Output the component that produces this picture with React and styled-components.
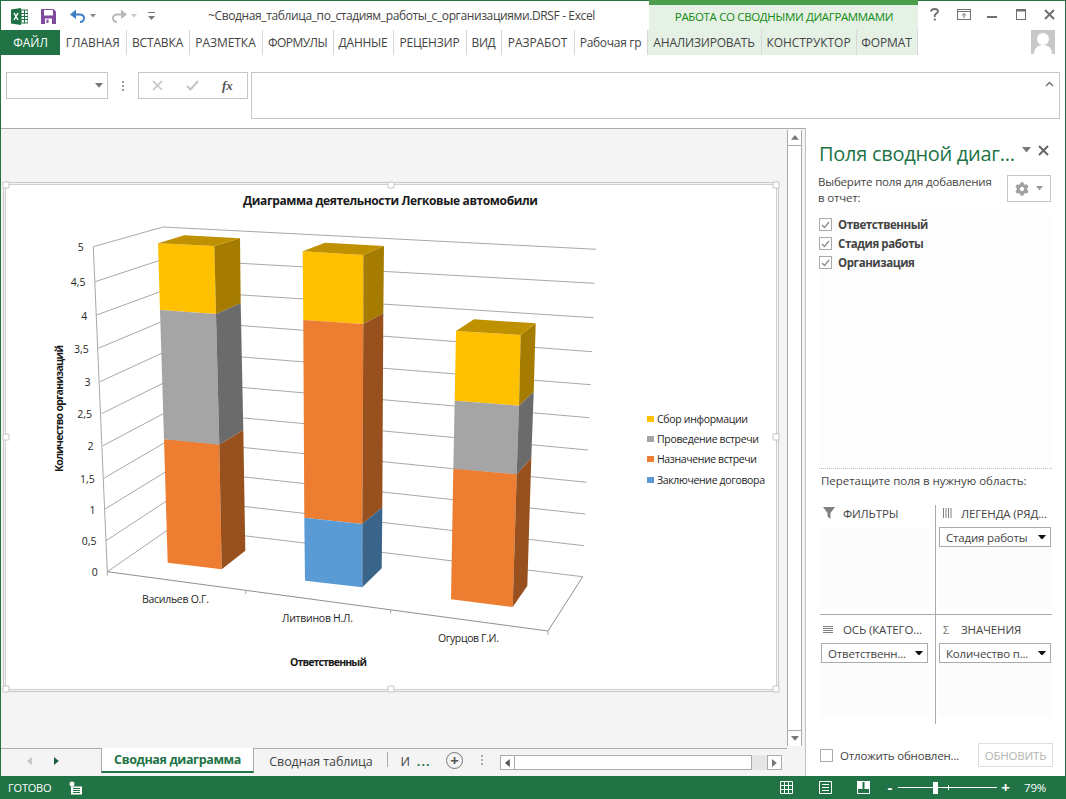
import React from 'react';
import styled, { createGlobalStyle } from 'styled-components';
import { FaCog } from 'react-icons/fa';

const GREEN = '#217346';
const UI = '"Open Sans", "Noto Sans", sans-serif';

const Global = createGlobalStyle`
  html, body { margin: 0; padding: 0; background: #fff; overflow: hidden; }
  * { box-sizing: border-box; }
  body { font-family: ${UI}; color: #444; }
`;

const Win = styled.div`
  width: 1066px; height: 799px; display: flex; flex-direction: column;
  background: #fff; border-left: 1px solid ${GREEN}; border-right: 1px solid ${GREEN};
  overflow: hidden;
`;
const TitleBar = styled.div`
  height: 30px; flex: none; display: flex; align-items: stretch; border-top: 1px solid ${GREEN};
`;
const Qat = styled.div`
  width: 164px; flex: none; display: flex; align-items: center; padding-left: 10px; margin-top: 1px;
`;
const QatIcon = styled.svg`
  display: block; flex: none; margin-right: ${p => p.$mr || 0}px;
`;
const DocTitle = styled.div`
  width: 484px; flex: none; padding-left: 43px; font-size: 12px; line-height: 29px; white-space: nowrap;
  letter-spacing: -0.375px; color: #444;
`;
const ContextHead = styled.div`
  width: 269px; flex: none; margin-top: -1px; background: #e6f1e6; border-top: 5px solid #4c9e4c;
  display: flex; align-items: center; justify-content: center; padding: 0 0 2px 1px;
  font-size: 11.5px; letter-spacing: -0.35px; color: #108a10; white-space: nowrap;
`;
const WinBtns = styled.div`
  flex: 1; display: flex; align-items: center; padding-left: 12px; padding-bottom: 2px;
`;
const TabBar = styled.div`
  height: 25px; flex: none; display: flex; align-items: stretch; position: relative;
`;
const FileTab = styled.div`
  width: 59px; flex: none; background: ${GREEN}; color: #fff; font-size: 12px;
  display: flex; align-items: center; justify-content: center;
`;
const Tab = styled.div`
  width: ${p => p.$w}px; flex: none; display: flex; align-items: center; justify-content: center; padding-bottom: 1px;
  font-size: 12px; color: #444; white-space: nowrap; letter-spacing: ${p => p.$ls}px;
  border-right: 1px solid #d8d8d8; background: ${p => (p.$ctx ? '#e6f1e6' : 'transparent')};
`;
const Avatar = styled.svg`
  position: absolute; left: 1030px; top: 0;
`;
const FormulaRow = styled.div`
  height: 47px; flex: none; margin: 17px 0 9px; display: flex; align-items: flex-start; padding-left: 5px;
`;
const NameBox = styled.div`
  width: 102px; height: 27px; flex: none; border: 1px solid #c6c6c6; display: flex; align-items: center;
  justify-content: flex-end; padding-right: 4px;
`;
const Grip = styled.div`
  width: 30px; height: 27px; flex: none; display: flex; flex-direction: column; gap: 2px;
  align-items: center; justify-content: center;
  i { display: block; width: 2px; height: 2px; background: #999; }
`;
const FuncBox = styled.div`
  width: 110px; height: 27px; flex: none; border: 1px solid #c6c6c6; display: flex; align-items: center;
  gap: 23px; padding-left: 13px; color: #555;
`;
const FxLabel = styled.span`
  font-family: "Liberation Serif", serif; font-style: italic; font-weight: bold; font-size: 13px; color: #555;
`;
const FormulaInput = styled.div`
  width: 809px; height: 47px; flex: none; margin-left: 3px; border: 1px solid #c6c6c6; display: flex;
  justify-content: flex-end; padding: 8px 5px 0 0;
`;
const Main = styled.div`
  flex: 1; min-height: 0; display: flex; align-items: stretch;
`;
const Sheet = styled.div`
  width: 805px; flex: none; display: flex; flex-direction: column; border-top: 1px solid #ababab;
  border-right: 1px solid #c0c0c0; background: #f4f4f4;
`;
const SheetBody = styled.div`
  flex: 1; min-height: 0; display: flex; align-items: stretch;
`;
const Canvas = styled.div`
  width: 786px; flex: none; padding: 55px 0 0 4px;
`;
const ChartFrame = styled.div`
  width: 772px; height: 506px; background: #fff; position: relative; border: 1px solid #d0d0d0;
  outline: 1px solid #c8c8c8; outline-offset: 1px;
`;
const Handle = styled.div`
  position: absolute; width: 7px; height: 7px; background: #fff; border: 1px solid #c4c4c4; border-radius: 1px;
  left: ${p => p.$x}; top: ${p => p.$y}; transform: translate(-50%, -50%);
`;
const ChartSvg = styled.svg`
  display: block; width: 770px; height: 504px; font-family: ${UI};
`;
const VScroll = styled.div`
  width: 15px; flex: none; margin: 1px 0 2px; display: flex; flex-direction: column; justify-content: space-between;
  background: #fff; border-left: 1px solid #ababab; border-right: 1px solid #ababab;
`;
const ScrollBtn = styled.div`
  height: 16px; display: flex; align-items: center; justify-content: center; background: #fff;
  border-${p => p.$side}: 1px solid #ababab;
`;
const SheetTabs = styled.div`
  height: 28px; flex: none; display: flex; align-items: flex-start; padding-bottom: 3px;
`;
const TabStrip = styled.div`
  height: 25px; flex: 1; display: flex; align-items: stretch; border-top: 1px solid #ababab; margin-right: 18px;
`;
const Nav = styled.div`
  width: 100px; flex: none; display: flex; align-items: center; gap: 22px; padding-left: 26px;
`;
const ActiveSheet = styled.div`
  width: 153px; flex: none; background: #fff; border-left: 1px solid #ababab; border-right: 1px solid #ababab;
  border-bottom: 2px solid ${GREEN}; margin-top: -1px; color: ${GREEN}; font-weight: 700; font-size: 12.5px;
  display: flex; align-items: center; justify-content: center; white-space: nowrap; letter-spacing: -0.38px;
`;
const SheetTab = styled.div`
  width: ${p => p.$w}px; flex: none; display: flex; align-items: center; justify-content: center; font-size: 12.5px;
  color: #444; white-space: nowrap; letter-spacing: -0.1px; ${p => p.$sep ? 'position: relative; &::after { content: ""; position: absolute; right: 0; top: 3px; bottom: 6px; width: 1px; background: #ababab; }' : ''}
`;
const MoreDots = styled.b`
  color: ${GREEN}; letter-spacing: 1px; margin-left: 7px;
`;
const PlusBtn = styled.div`
  width: 17px; height: 17px; flex: none; margin: 3px 0 0 3px; border: 1px solid #777; border-radius: 50%;
  display: flex; align-items: center; justify-content: center; color: #555; font-size: 15px; line-height: 1; font-weight: 700;
  background: #f4f4f4;
`;
const TabGrip = styled.div`
  width: 37px; flex: none; display: flex; flex-direction: column; gap: 2px; align-items: center; justify-content: center;
  padding-bottom: 3px; i { display: block; width: 2px; height: 2px; background: #aaa; }
`;
const HScroll = styled.div`
  flex: 1; display: flex; align-items: stretch; height: 15px; margin-top: 6px; margin-right: 5px;
`;
const HBtn = styled.div`
  width: 15px; flex: none; border: 1px solid #ababab; background: #fff; display: flex; align-items: center; justify-content: center;
`;
const HThumb = styled.div`
  flex: 1; background: #fff; border: 1px solid #ababab; border-left: none;
`;
const HTrack = styled.div`
  width: 15px; flex: none; background: #e6e6e6;
`;

const Pane = styled.div`
  flex: 1; min-width: 0; display: flex; flex-direction: column; background: #fff; padding: 10px 13px 0 13px;
`;
const PaneHead = styled.div`
  height: 30px; flex: none; display: flex; align-items: center; justify-content: space-between; padding-right: 3px;
`;
const PaneTitle = styled.div`
  font-size: 20px; color: ${GREEN}; white-space: nowrap; letter-spacing: -0.28px; font-weight: 400;
`;
const PaneCtrls = styled.div`
  display: flex; align-items: center; gap: 7px; padding-bottom: 6px;
`;
const ChooseRow = styled.div`
  height: 28px; flex: none; margin-top: 7px; display: flex; justify-content: space-between;
`;
const Hint = styled.div`
  font-size: 11.5px; line-height: 16px; color: #444; white-space: pre-line; letter-spacing: -0.18px;
  margin: -1px 0 0 -1px;
`;
const GearBtn = styled.div`
  width: 44px; height: 27px; flex: none; border: 1px solid #c6c6c6; display: flex; align-items: center; justify-content: center; gap: 7px;
  color: #a0a0a0; margin-right: 1px;
`;
const FieldList = styled.div`
  height: 252px; flex: none; margin-top: 11px; background: #fdfdfd; margin-right: 1px; padding-top: 1px;
`;
const FieldRow = styled.div`
  height: 19px; display: flex; align-items: center; gap: 6px; font-size: 11.5px; font-weight: 700; color: #444; letter-spacing: -0.43px;
`;
const Check = styled.div`
  width: 13px; height: 13px; flex: none; border: 1px solid #ababab; display: flex; align-items: center; justify-content: center; background: #fff;
`;
const Dotted = styled.div`
  height: 0; flex: none; margin-top: 2px; border-top: 1px dotted #bbb;
`;
const DragHint = styled.div`
  font-size: 11.5px; line-height: 16px; margin-top: 4px; padding-left: 2px; color: #444; white-space: nowrap; letter-spacing: -0.04px;
`;
const Zones = styled.div`
  width: 232px; height: 219px; flex: none; margin: 16px 0 0 1px; display: grid; grid-template-columns: 116px 116px; grid-template-rows: 110px 109px;
`;
const Zone = styled.div`
  padding-top: ${p => p.$pad}px; display: flex; flex-direction: column; min-width: 0;
  padding-left: ${p => (p.$right ? 2 : 0)}px;
  ${p => (p.$right ? '' : 'border-right: 1px solid #ababab;')}
  ${p => (p.$top ? 'border-bottom: 1px solid #ababab;' : '')}
`;
const ZoneHead = styled.div`
  height: 16px; flex: none; display: flex; align-items: center; font-size: 11.5px; color: #444; white-space: nowrap; letter-spacing: -0.14px;
  padding-left: ${p => (p.$right ? 5 : 3)}px; margin-bottom: 6px;
`;
const ZoneIcon = styled.span`
  width: ${p => (p.$right ? 18 : 20)}px; flex: none; display: flex; justify-content: flex-start; color: #777; font-size: 11px;
`;
const ZoneBody = styled.div`
  flex: 1; min-height: 0; background: #fcfcfc; margin-right: ${p => (p.$right ? 0 : 6)}px; margin-bottom: 6px;
`;
const Pill = styled.div`
  height: 20px; margin: 0 ${p => (p.$right ? 1 : 1)}px 0 ${p => (p.$right ? 1 : 1)}px; display: flex; align-items: center; justify-content: space-between; padding: 0 4px 0 6px;
  border: 1px solid #ababab; background: #fff; font-size: 11.5px; color: #444; white-space: nowrap; letter-spacing: -0.18px;
`;
const Foot = styled.div`
  height: 24px; flex: none; margin-top: 19px; display: flex; align-items: center; justify-content: space-between; padding-left: 1px; margin-right: -1px;
`;
const DeferLabel = styled.label`
  display: flex; align-items: center; gap: 7px; font-size: 11.5px; color: #444; white-space: nowrap; letter-spacing: -0.18px;
`;
const UpdateBtn = styled.div`
  width: 75px; height: 24px; border: 1px solid #dedede; color: #b4b4b4; font-size: 11.5px; letter-spacing: -0.2px;
  display: flex; align-items: center; justify-content: center;
`;
const Status = styled.div`
  height: 23px; flex: none; margin: 0 -1px; background: ${GREEN}; color: #fff; display: flex; align-items: center;
  font-size: 11px; padding: 0 13px 0 8px;
`;
const StatusText = styled.span`
  letter-spacing: -0.2px; width: 61px; flex: none;
`;
const StatusSpacer = styled.div`
  flex: 1;
`;
const StatusIcon = styled.svg`
  display: block; flex: none; margin-right: ${p => p.$mr || 0}px;
`;
const Zoom = styled.div`
  width: 99px; height: 13px; flex: none; position: relative; display: flex; align-items: center; margin: 0 2px 0 4px;
  &::before { content: ""; display: block; width: 100%; height: 1px; background: #fff; }
`;
const ZoomThumb = styled.div`
  position: absolute; left: 35px; top: 1px; width: 5px; height: 12px; background: #fff;
`;
const ZoomTick = styled.div`
  position: absolute; left: 50px; top: 4px; width: 1px; height: 5px; background: #fff;
`;
const ZoomSign = styled.span`
  font-size: 15px; font-weight: 700; line-height: 1; width: ${p => p.$w}px; text-align: center; flex: none; margin-top: -1px;
`;
const ZoomPct = styled.span`
  width: 41px; flex: none; padding-left: 12px; font-size: 11.5px; letter-spacing: -0.2px;
`;

const Tri = ({ c = '#777', s = 8, up, right, left }) => {
  const h = s * 0.6;
  let pts = `0,0 ${s},0 ${s / 2},${h}`;
  let w = s, ht = h;
  if (up) pts = `0,${h} ${s},${h} ${s / 2},0`;
  if (right) { pts = `0,0 ${h},${s / 2} 0,${s}`; w = h; ht = s; }
  if (left) { pts = `${h},0 0,${s / 2} ${h},${s}`; w = h; ht = s; }
  return <svg width={w} height={ht} viewBox={`0 0 ${w} ${ht}`} style={{ display: 'block', flex: 'none' }}><polygon points={pts} fill={c} /></svg>;
};

const ExcelIcon = () => (
  <QatIcon width="17" height="17" viewBox="0 0 17 17" $mr={13}>
    <rect x="6" y="2" width="11" height="13" fill="#fff" stroke="#1e7145" />
    <path d="M10 2v13M13.500 2v13M6 5.500h11M6 8.500h11M6 11.500h11" stroke="#1e7145" strokeWidth="1" />
    <polygon points="0,1.500 10,0 10,17 0,15.500" fill="#1e7145" />
    <path d="M3 5l4 7M7 5l-4 7" stroke="#fff" strokeWidth="1.500" />
  </QatIcon>
);
const SaveIcon = () => (
  <QatIcon width="15" height="15" viewBox="0 0 15 15" $mr={14}>
    <path d="M0 0h12.500L15 2.500V15H0z" fill="#7e4b9e" />
    <rect x="3" y="1" width="9" height="5.500" fill="#fff" />
    <rect x="4" y="9.500" width="7" height="5.500" fill="#fff" />
    <rect x="5.500" y="10.500" width="2" height="3.500" fill="#7e4b9e" />
  </QatIcon>
);
const UndoIcon = ({ c, flip, mr }) => (
  <QatIcon width="16" height="14" viewBox="0 0 16 14" $mr={mr} style={flip ? { transform: 'scaleX(-1)' } : undefined}>
    <path d="M2 5.500h7.500c3 0 4.500 1.800 4.500 3.800s-1.700 3.700-4 3.700" fill="none" stroke={c} strokeWidth="2" />
    <polygon points="6,0.500 6,10 0,5.500" fill={c} />
  </QatIcon>
);
const WinIcons = () => (
  <>
    <QatIcon width="9" height="13" viewBox="0 0 9 13" $mr={18}>
      <path d="M1 3.500C1 1.500 2.500 1 4.500 1S8 2 8 3.500 6 5.500 4.800 7v2" fill="none" stroke="#707070" strokeWidth="1.800" />
      <rect x="3.800" y="10.500" width="2" height="2" fill="#707070" />
    </QatIcon>
    <QatIcon width="14" height="11" viewBox="0 0 14 11" $mr={16}>
      <rect x=".5" y=".5" width="13" height="10" fill="none" stroke="#707070" />
      <path d="M1 2.500h12" stroke="#707070" />
      <path d="M7 9V4.500M5 6.500l2-2 2 2" fill="none" stroke="#707070" />
    </QatIcon>
    <QatIcon width="10" height="11" viewBox="0 0 10 11" $mr={19}>
      <rect x="0" y="7" width="10" height="2" fill="#707070" />
    </QatIcon>
    <QatIcon width="10" height="11" viewBox="0 0 10 11" $mr={18}>
      <rect x=".5" y=".5" width="9" height="10" fill="none" stroke="#707070" />
      <rect x="0" y="0" width="10" height="2.500" fill="#707070" />
    </QatIcon>
    <QatIcon width="11" height="11" viewBox="0 0 11 11">
      <path d="M1 1l9 9M10 1l-9 9" stroke="#707070" strokeWidth="2" />
    </QatIcon>
  </>
);

const tabs = [
  ['ГЛАВНАЯ', 66.5, 0], ['ВСТАВКА', 63, -0.14], ['РАЗМЕТКА', 73, -0.05], ['ФОРМУЛЫ', 71, -0.56], ['ДАННЫЕ', 60, -0.25], ['РЕЦЕНЗИР', 73, -0.17], ['ВИД', 35, -0.42], ['РАЗРАБОТ', 73, -0.05], ['Рабочая гр', 73, -0.3],
];
const ctxTabs = [['АНАЛИЗИРОВАТЬ', 114, -0.19], ['КОНСТРУКТОР', 95, -0.06], ['ФОРМАТ', 61, -0.09]];

const backLeftY = [227, 259, 290, 320, 351, 381, 411, 440, 469, 498, 527];
const backRight = [[596, 249.3], [594.7, 283.3], [593.7, 317.7], [592, 351.7], [590.7, 384.7], [589.3, 417.7], [588, 450], [586.7, 482.3], [585.3, 514], [584, 545.7], [582.7, 576.7]];
const frontAxis = [[93.3, 246.7], [95, 281.7], [96.7, 315], [98.3, 348.3], [100, 381.7], [101.500, 413.7], [103, 445.7], [104.300, 478], [105, 509], [106, 540.7], [107.3, 571.7]];
const yLabels = ['5', '4,5', '4', '3,5', '3', '2,5', '2', '1,5', '1', '0,5', '0'];

const C = {
  y: ['#ffc000', '#a67c00', '#bf9000'],
  g: ['#a5a5a5', '#6b6b6b'],
  o: ['#ed7d31', '#98511e'],
  b: ['#5b9bd5', '#3a6489'],
};
const bars = [
  {
    top: [[158, 243.3], [214.3, 246], [240, 238.3], [184.3, 235.3]],
    segs: [
      ['y', [158, 243.3], [214.3, 246], [240, 238.3], [160, 310], [216, 314], [240.7, 303.3]],
      ['g', [160, 310], [216, 314], [240.7, 303.3], [164, 439.3], [219.3, 444.7], [243.3, 430]],
      ['o', [164, 439.3], [219.3, 444.7], [243.3, 430], [167.7, 562.7], [221.7, 569.3], [245.3, 550.7]],
    ],
  },
  {
    top: [[302.7, 251.3], [363.3, 255], [384, 246], [325, 242.7]],
    segs: [
      ['y', [302.7, 251.3], [363.3, 255], [384, 246], [303.3, 320], [363.3, 324], [383.3, 313.3]],
      ['o', [303.3, 320], [363.3, 324], [383.3, 313.3], [304.3, 517.7], [362.3, 524], [382.3, 507.3]],
      ['b', [304.3, 517.7], [362.3, 524], [382.3, 507.3], [305, 580.7], [362.3, 587.3], [381.7, 568.3]],
    ],
  },
  {
    top: [[456, 331], [520.7, 335], [535.7, 323.3], [474, 319.3]],
    segs: [
      ['y', [456, 331], [520.7, 335], [535.7, 323.3], [454.7, 400.7], [519, 405.7], [533.7, 391.7]],
      ['g', [454.7, 400.7], [519, 405.7], [533.7, 391.7], [453.3, 468.7], [516.7, 474.3], [531.3, 458.3]],
      ['o', [453.3, 468.7], [516.7, 474.3], [531.3, 458.3], [451, 599.3], [512.7, 607], [527.3, 586]],
    ],
  },
];
const pts = a => a.map(p => p.join(',')).join(' ');
const legend = [['#ffc000', 'Сбор информации', 421, 91], ['#a5a5a5', 'Проведение встречи', 441, 102], ['#ed7d31', 'Назначение встречи', 461, 100], ['#5b9bd5', 'Заключение договора', 482, 108]];

const Chart = () => (
  <ChartSvg viewBox="6 185 770 504">
    <text x="243" y="204.500" fontSize="12" fontWeight="700" fill="#1a1a1a" textLength="295" lengthAdjust="spacing">Диаграмма деятельности Легковые автомобили</text>
    <g stroke="#a8a8a8" strokeWidth="1" fill="none">
      {backLeftY.map((y, i) => {
        const x = 163 + (i / 10) * 9;
        return (
          <g key={i}>
            <line x1={x} y1={y} x2={backRight[i][0]} y2={backRight[i][1]} />
            <line x1={frontAxis[i][0]} y1={frontAxis[i][1]} x2={x} y2={y} />
          </g>
        );
      })}
      <line x1="93.300" y1="246.700" x2="107.300" y2="571.700" />
      <polyline points="107.300,571.700 548,631 582.700,576.700" stroke="#909090" />
      <path d="M107.300 571.700v4M245.700 590.300v3.500M390.700 610v3.500M548 631v4" />
    </g>
    {bars.map((b, i) => (
      <g key={i}>
        {b.segs.map(([k, a, c, d, e, f, g], j) => (
          <g key={j}>
            <polygon points={pts([a, c, f, e])} fill={C[k][0]} />
            <polygon points={pts([c, d, g, f])} fill={C[k][1]} />
          </g>
        ))}
        <polygon points={pts(b.top)} fill="#bf9000" />
      </g>
    ))}
    <g fontSize="10.5" fill="#262626" textAnchor="end">
      {yLabels.map((l, i) => (
        <text key={l} x={frontAxis[i][0] - 9.500} y={frontAxis[i][1] + 4.500}>{l}</text>
      ))}
    </g>
    <text transform="translate(63 472) rotate(-90)" fontSize="10.5" fontWeight="700" fill="#1a1a1a" textLength="127" lengthAdjust="spacing">Количество организаций</text>
    <g fontSize="10.5" fill="#262626">
      <text x="142" y="603" textLength="67" lengthAdjust="spacing">Васильев О.Г.</text>
      <text x="282" y="622" textLength="71" lengthAdjust="spacing">Литвинов Н.Л.</text>
      <text x="438" y="642" textLength="61" lengthAdjust="spacing">Огурцов Г.И.</text>
    </g>
    <text x="290" y="666" fontSize="10.5" fontWeight="700" fill="#1a1a1a" textLength="77" lengthAdjust="spacing">Ответственный</text>
    {legend.map(([c, t, y, w]) => (
      <g key={t}>
        <rect x="647" y={y - 5} width="7" height="6" fill={c} />
        <text x="657" y={y + 1.500} fontSize="10.5" fill="#262626" textLength={w} lengthAdjust="spacing">{t}</text>
      </g>
    ))}
  </ChartSvg>
);

const CheckMark = () => (
  <svg width="9" height="8" viewBox="0 0 9 8"><path d="M1 4l2.500 2.500L8 1" fill="none" stroke="#8a8a8a" strokeWidth="1.200" /></svg>
);

const ZONES = [
  { id: 'f', label: 'ФИЛЬТРЫ', icon: <svg width="12" height="12" viewBox="0 0 12 12" style={{ display: 'block' }}><path d="M0 0h12L7.500 6v6L4.500 9.500V6z" fill="#808080" /></svg> },
  { id: 'l', label: 'ЛЕГЕНДА (РЯД...', pill: 'Стадия работы', right: true, icon: <svg width="10" height="10" viewBox="0 0 10 10" style={{ display: 'block' }}><path d="M.5 0v10M3 0v10M5.500 0v10M8 0v10" stroke="#808080" /></svg> },
  { id: 'a', label: 'ОСЬ (КАТЕГО...', pill: 'Ответственн...', icon: <svg width="10" height="8" viewBox="0 0 10 8" style={{ display: 'block', marginTop: 1 }}><path d="M0 .5h10M0 2.500h10M0 4.500h10M0 6.500h10" stroke="#808080" /></svg> },
  { id: 'v', label: 'ЗНАЧЕНИЯ', pill: 'Количество п...', right: true, icon: 'Σ' },
];

export default function App() {
  return (
    <Win>
      <Global />
      <TitleBar>
        <Qat>
          <ExcelIcon />
          <SaveIcon />
          <UndoIcon c="#3d7fc4" mr={4} />
          <span style={{ marginRight: 15 }}><Tri c="#888" s={6} /></span>
          <UndoIcon c="#b8b8b8" flip mr={4} />
          <span style={{ marginRight: 11 }}><Tri c="#c8c8c8" s={6} /></span>
          <QatIcon width="7" height="9" viewBox="0 0 7 9"><path d="M0 .5h7" stroke="#777" /><polygon points="0,4 7,4 3.500,8" fill="#777" /></QatIcon>
        </Qat>
        <DocTitle>~Сводная_таблица_по_стадиям_работы_с_организациями.DRSF - Excel</DocTitle>
        <ContextHead>РАБОТА СО СВОДНЫМИ ДИАГРАММАМИ</ContextHead>
        <WinBtns><WinIcons /></WinBtns>
      </TitleBar>
      <TabBar>
        <FileTab>ФАЙЛ</FileTab>
        {tabs.map(([t, w, ls]) => <Tab key={t} $w={w} $ls={ls}>{t}</Tab>)}
        {ctxTabs.map(([t, w, ls]) => <Tab key={t} $w={w} $ls={ls} $ctx>{t}</Tab>)}
        <Avatar width="24" height="24" viewBox="0 0 24 24">
          <rect width="24" height="24" fill="#c8c8c8" />
          <circle cx="12" cy="9" r="6" fill="#fff" />
          <path d="M3 24c0-6 4-9 9-9s9 3 9 9z" fill="#fff" />
        </Avatar>
      </TabBar>
      <FormulaRow>
        <NameBox><Tri c="#777" s={8} /></NameBox>
        <Grip><i /><i /><i /></Grip>
        <FuncBox>
          <svg width="11" height="11" viewBox="0 0 11 11"><path d="M1 1l9 9M10 1l-9 9" stroke="#c4c4c4" strokeWidth="1.600" /></svg>
          <svg width="13" height="11" viewBox="0 0 13 11"><path d="M1 6l3.500 3.500L12 1" fill="none" stroke="#c4c4c4" strokeWidth="2" /></svg>
          <FxLabel>fx</FxLabel>
        </FuncBox>
        <FormulaInput>
          <svg width="9" height="6" viewBox="0 0 9 6"><path d="M1 5l3.500-3.500L8 5" fill="none" stroke="#777" strokeWidth="1.500" /></svg>
        </FormulaInput>
      </FormulaRow>
      <Main>
        <Sheet>
          <SheetBody>
            <Canvas>
              <ChartFrame>
                <Chart />
                <Handle $x="0" $y="0" />
                <Handle $x="50%" $y="0" />
                <Handle $x="100%" $y="0" />
                <Handle $x="0" $y="50%" />
                <Handle $x="100%" $y="50%" />
                <Handle $x="0" $y="100%" />
                <Handle $x="50%" $y="100%" />
                <Handle $x="100%" $y="100%" />
              </ChartFrame>
            </Canvas>
            <VScroll>
              <ScrollBtn $side="bottom"><Tri c="#777" s={8} up /></ScrollBtn>
              <ScrollBtn $side="top"><Tri c="#777" s={8} /></ScrollBtn>
            </VScroll>
          </SheetBody>
          <SheetTabs>
            <TabStrip>
              <Nav><Tri c="#c4c4c4" s={8} left /><Tri c="#1c5f3a" s={8} right /></Nav>
              <ActiveSheet>Сводная диаграмма</ActiveSheet>
              <SheetTab $w={134} $sep>Сводная таблица</SheetTab>
              <SheetTab $w={55}>И<MoreDots>...</MoreDots></SheetTab>
              <PlusBtn>+</PlusBtn>
              <TabGrip><i /><i /><i /></TabGrip>
              <HScroll>
                <HBtn><Tri c="#555" s={8} left /></HBtn>
                <HThumb />
                <HTrack />
                <HBtn><Tri c="#777" s={8} right /></HBtn>
              </HScroll>
            </TabStrip>
          </SheetTabs>
        </Sheet>
        <Pane>
          <PaneHead>
            <PaneTitle>Поля сводной диаг...</PaneTitle>
            <PaneCtrls>
              <Tri c="#777" s={9} />
              <svg width="11" height="11" viewBox="0 0 11 11"><path d="M1 1l9 9M10 1l-9 9" stroke="#666" strokeWidth="2" /></svg>
            </PaneCtrls>
          </PaneHead>
          <ChooseRow>
            <Hint>{'Выберите поля для добавления\nв отчет:'}</Hint>
            <GearBtn><FaCog size={14} /><Tri c="#999" s={7} /></GearBtn>
          </ChooseRow>
          <FieldList>
            {['Ответственный', 'Стадия работы', 'Организация'].map(f => (
              <FieldRow key={f}><Check><CheckMark /></Check>{f}</FieldRow>
            ))}
          </FieldList>
          <Dotted />
          <DragHint>Перетащите поля в нужную область:</DragHint>
          <Zones>
            {ZONES.map((z, i) => (
              <Zone key={z.id} $right={z.right} $top={i < 2} $pad={i < 2 ? 0 : 6}>
                <ZoneHead $right={z.right}><ZoneIcon $right={z.right}>{z.icon}</ZoneIcon>{z.label}</ZoneHead>
                <ZoneBody $right={z.right}>
                  {z.pill && <Pill $right={z.right}>{z.pill}<Tri c="#111" s={8} /></Pill>}
                </ZoneBody>
              </Zone>
            ))}
          </Zones>
          <Foot>
            <DeferLabel><Check />Отложить обновлен...</DeferLabel>
            <UpdateBtn>ОБНОВИТЬ</UpdateBtn>
          </Foot>
        </Pane>
      </Main>
      <Status>
        <StatusText>ГОТОВО</StatusText>
        <StatusIcon width="13" height="14" viewBox="0 0 13 14">
          <circle cx="3" cy="3" r="2.500" fill="#fff" />
          <rect x="2" y="5.500" width="11" height="8" fill="#fff" />
          <path d="M4 7.500h7M4 9.500h7M4 11.500h7" stroke="#217346" />
        </StatusIcon>
        <StatusSpacer />
        <StatusIcon width="13" height="13" viewBox="0 0 13 13" $mr={26}>
          <path d="M.5 .5h12v12H.5zM.5 4.500h12M.5 8.500h12M4.500 .5v12M8.500 .5v12" fill="none" stroke="#fff" />
        </StatusIcon>
        <StatusIcon width="13" height="13" viewBox="0 0 13 13" $mr={25}>
          <path d="M.5 .5h12v12H.5z" fill="none" stroke="#fff" />
          <path d="M3 3.500h7M3 6.500h7M3 9.500h7" stroke="#fff" />
        </StatusIcon>
        <StatusIcon width="13" height="13" viewBox="0 0 13 13" $mr={16}>
          <path d="M.5 .5h12v12H.5z" fill="none" stroke="#fff" />
          <path d="M0 0h5.500v8H0zM7.500 0H13v8H7.500z" fill="#fff" />
        </StatusIcon>
        <ZoomSign $w={8}>-</ZoomSign>
        <Zoom><ZoomThumb /><ZoomTick /></Zoom>
        <ZoomSign $w={13}>+</ZoomSign>
        <ZoomPct>79%</ZoomPct>
      </Status>
    </Win>
  );
}
